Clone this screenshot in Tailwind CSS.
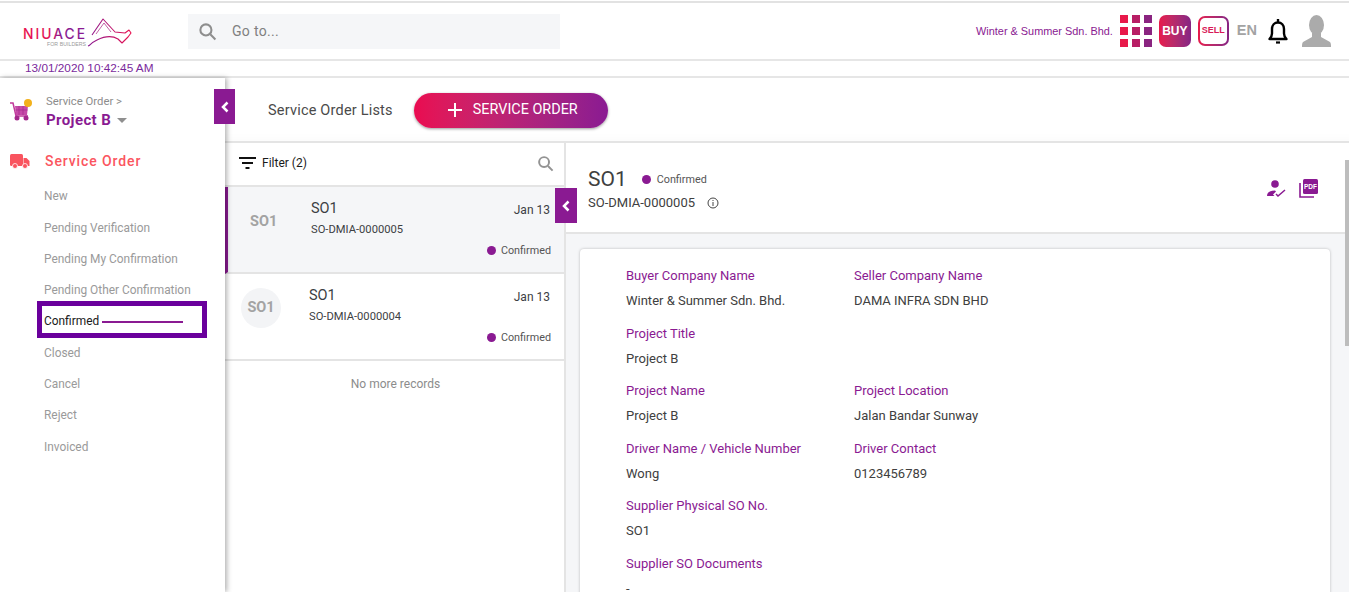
<!DOCTYPE html>
<html lang="en">
<head>
    <meta charset="UTF-8">
    <title>Service Order</title>
    <script src="https://cdn.jsdelivr.net/npm/@tailwindcss/browser@4"></script>
</head>
<body class="h-[592px] overflow-hidden bg-white font-['Roboto',sans-serif] text-[#3c4043]">
    <div class="h-[3px] border-b-2 border-[#e2e2e2]"></div>

    <!-- top bar -->
    <header class="h-[58px] flex items-center border-b-2 border-[#e6e6e6]">
        <div class="w-[188px] shrink-0 pl-[23px]">
            <svg width="110" height="32" viewBox="0 0 110 32" fill="none">
                <defs>
                    <linearGradient id="logoGrad" x1="0" y1="0" x2="1" y2="0">
                        <stop offset="0" stop-color="#e8104f"/>
                        <stop offset="0.45" stop-color="#e0145a"/>
                        <stop offset="0.6" stop-color="#8a1a92"/>
                        <stop offset="1" stop-color="#8a1a92"/>
                    </linearGradient>
                    <linearGradient id="bullGrad" x1="0" y1="0" x2="1" y2="0">
                        <stop offset="0" stop-color="#8a1a92"/>
                        <stop offset="1" stop-color="#e8104f"/>
                    </linearGradient>
                </defs>
                <text x="0" y="24" font-family="Inter, sans-serif" font-size="13.8" font-weight="500" textLength="62" fill="url(#logoGrad)">NIUACE</text>
                <text x="24" y="30.5" font-family="Liberation Sans, sans-serif" font-size="5.2" textLength="39" fill="#999">FOR BUILDERS</text>
                <path d="M69 20 80 4 92 17 102 18 106 15 108 18 105 22 99 28 95 24C90 21 82 21 74 25S68 30 65 31" stroke="url(#bullGrad)" stroke-width="1.100" stroke-linejoin="round"/>
                <path d="M73 19 81 8 88 17" stroke="#a81c80" stroke-width="0.700"/>
            </svg>
        </div>
        <div class="w-[372px] h-[35px] bg-[#f5f6f8] flex items-center pl-[10px]">
            <svg class="w-[19px] h-[19px] text-[#8e8e8e]" viewBox="0 0 24 24" fill="none" stroke="currentColor" stroke-width="2.600"><circle cx="10" cy="10" r="7"/><path d="M15.500 15.500 22 22"/></svg>
            <span class="ml-[15px] text-[14px] tracking-[0.3px] text-[#808080]">Go to...</span>
        </div>
        <div class="ml-auto flex items-center pr-[18px]">
            <span class="font-['Liberation_Sans',sans-serif] text-[10.900px] text-[#8a1a92] mr-[7px]">Winter &amp; Summer Sdn. Bhd.</span>
            <div class="grid grid-cols-3 gap-[4px] w-[32px] mr-[7px]">
                <i class="h-[8px] bg-[#e8194a]"></i><i class="h-[8px] bg-[#b81e65]"></i><i class="h-[8px] bg-[#8a2480]"></i>
                <i class="h-[8px] bg-[#e8194a]"></i><i class="h-[8px] bg-[#b81e65]"></i><i class="h-[8px] bg-[#8a2480]"></i>
                <i class="h-[8px] bg-[#e8194a]"></i><i class="h-[8px] bg-[#b81e65]"></i><i class="h-[8px] bg-[#8a2480]"></i>
            </div>
            <div class="w-[32px] h-[32px] rounded-[7px] bg-gradient-to-r from-[#e8194a] to-[#852484] text-white font-['Liberation_Sans',sans-serif] font-bold text-[12px] flex items-center justify-center mr-[7px]">BUY</div>
            <div class="w-[31px] h-[30px] rounded-[7px] p-[2px] bg-gradient-to-r from-[#e8194a] to-[#852484] mr-[8px]">
                <div class="w-full h-full rounded-[5px] bg-white text-[#d81a58] font-['Liberation_Sans',sans-serif] font-bold text-[9px] flex items-center justify-center">SELL</div>
            </div>
            <span class="font-['Liberation_Sans',sans-serif] font-bold text-[14.500px] text-[#a3a3a3] mr-[11px]">EN</span>
            <svg class="w-[20px] h-[25px] mr-[14px]" viewBox="0 0 20 25" fill="none" stroke="#000" stroke-width="2.400"><path d="M1.500 20h17c-1.500-1.500-2.500-3-2.500-5.500V10c0-4-2.500-6.500-6-6.500S4 6 4 10v4.500C4 17 3 18.500 1.500 20z" stroke-linejoin="round"/><path d="M10 0v3.500"/><path d="M8 23.500h4" stroke-width="2.200"/></svg>
            <svg class="w-[29px] h-[32px] blur-[0.5px]" viewBox="0 0 29 32" fill="#ababab"><ellipse cx="14.500" cy="10" rx="7.500" ry="10"/><path d="M10 18h9v4l9 5c1 1 1 3 1 5H0c0-2 0-4 1-5l9-5z"/></svg>
        </div>
    </header>

    <div class="h-[17px] border-b-2 border-[#e6e6e6] pl-[25px] font-['Liberation_Sans',sans-serif] text-[11.800px] leading-[15px] text-[#7b2a9c]">13/01/2020 10:42:45 AM</div>

    <div class="flex h-[514px]">
        <!-- sidebar -->
        <aside class="relative w-[225px] shrink-0 bg-white z-10 shadow-[2px_0_5px_rgba(0,0,0,0.3)]">
            <div class="flex pl-[9px] pt-[17px]">
                <svg class="w-[24px] h-[26px] mt-[3px]" viewBox="0 0 24 26">
                    <path d="M1 5h3l3 13h12" fill="none" stroke="#c0399a" stroke-width="1.500"/>
                    <path d="M6 8h13l-1 9H7z" fill="#c64aa8"/>
                    <path d="M10 8v9M14 8v9M6.500 12h12" stroke="#a3288c" stroke-width="0.700"/>
                    <circle cx="8" cy="20" r="2.500" fill="#a3288c"/><circle cx="17" cy="20" r="2.500" fill="#a3288c"/>
                    <circle cx="19" cy="5" r="4" fill="#f3b11c"/>
                </svg>
                <div class="ml-[13px]">
                    <div class="text-[11.300px] leading-[13px] text-[#8c8c8c]">Service Order &gt;</div>
                    <div class="flex items-center mt-[2px] text-[15px] font-bold tracking-[0.4px] text-[#8a1a92] leading-[20px]">Project B<span class="ml-[6px] w-0 h-0 border-x-[5px] border-x-transparent border-t-[5px] border-t-[#8f8f8f]"></span></div>
                </div>
            </div>
            <div class="flex items-center pl-[10px] mt-[21px] h-[20px]">
                <svg class="w-[20px] h-[15px]" viewBox="0 0 20 15" fill="#f9545f"><rect x="0" y="0" width="13" height="12" rx="1.500"/><path d="M13.500 4h3l3 3v5h-6z"/><circle cx="5" cy="12" r="2.500" stroke="#fff" stroke-width="0.800"/><circle cx="15" cy="12" r="2.500" stroke="#fff" stroke-width="0.800"/></svg>
                <span class="ml-[15px] text-[14px] font-medium tracking-[0.9px] text-[#fb5560]">Service Order</span>
            </div>
            <nav class="pl-[44px] mt-[10.500px] text-[11.900px] text-[#9a9a9a]">
                <div class="h-[31.300px] flex items-center">New</div>
                <div class="h-[31.300px] flex items-center">Pending Verification</div>
                <div class="h-[31.300px] flex items-center">Pending My Confirmation</div>
                <div class="h-[31.300px] flex items-center">Pending Other Confirmation</div>
                <div class="relative h-[31.300px] flex items-center text-[#1a1a1a]">
                    <span class="absolute -left-[7px] -top-[6px] w-[170px] h-[37px] border-[5px] border-[#6a009c]"></span>
                    <span class="relative">Confirmed</span>
                    <span class="relative ml-[3px] w-[81px] h-[2px] bg-[#8a1a92]"></span>
                </div>
                <div class="h-[31.300px] flex items-center">Closed</div>
                <div class="h-[31.300px] flex items-center">Cancel</div>
                <div class="h-[31.300px] flex items-center">Reject</div>
                <div class="h-[31.300px] flex items-center">Invoiced</div>
            </nav>
            <button class="absolute -right-[10px] top-[11px] w-[21px] h-[35px] bg-[#8a1a92] flex items-center justify-center">
                <svg class="w-[8px] h-[12px]" viewBox="0 0 8 12" fill="none" stroke="#fff" stroke-width="2.500"><path d="M6.500 1.500 2 6l4.500 4.500"/></svg>
            </button>
        </aside>

        <main class="flex-1 min-w-0 flex flex-col">
            <div class="h-[65px] shrink-0 flex items-center pl-[43px] pt-[1px] border-b-2 border-[#e4e4e4] shadow-[inset_0_-12px_12px_-12px_rgba(0,0,0,0.03)]">
                <span class="mt-[1px] text-[14.500px] tracking-[0.2px] text-[#4a4a4a]">Service Order Lists</span>
                <button class="ml-[21px] w-[194px] h-[35px] pl-[4px] rounded-full bg-gradient-to-r from-[#ea0a50] to-[#8a1a92] shadow-[0_1px_3px_rgba(0,0,0,0.4)] flex items-center justify-center text-white text-[14.400px]">
                    <svg class="w-[14px] h-[14px] mr-[11px]" viewBox="0 0 14 14" stroke="#fff" stroke-width="2"><path d="M7 0v14M0 7h14"/></svg>
                    <span class="-mt-[1px]">SERVICE ORDER</span>
                </button>
            </div>
            <div class="flex flex-1 min-h-0">
                <!-- list -->
                <section class="relative w-[341px] shrink-0 border-r-2 border-[#e4e4e4] bg-white">
                    <div class="h-[44px] flex items-center pl-[14px] pr-[10px] pb-[2px] border-b-2 border-[#e4e4e4]">
                        <svg class="w-[17px] h-[12px]" viewBox="0 0 17 12" stroke="#111" stroke-width="2"><path d="M0 1h17M3 6h11M6.500 11h4"/></svg>
                        <span class="ml-[6px] text-[12px] text-[#1a1a1a]">Filter (2)</span>
                        <svg class="ml-auto w-[17px] h-[17px] text-[#939393]" viewBox="0 0 24 24" fill="none" stroke="currentColor" stroke-width="2.800"><circle cx="10" cy="10" r="7"/><path d="M15.500 15.500 22 22"/></svg>
                    </div>
                    <div class="h-[87px] bg-[#f5f6f8] border-l-[3px] border-[#8a1a92] border-b-2 border-b-[#e4e4e4] flex pr-[14px]">
                        <div class="w-[83px] pl-[22px] pt-[24px] text-[14.500px] font-bold text-[#a3a3a3]">SO1</div>
                        <div class="flex-1 pt-[10px]">
                            <div class="flex justify-between"><span class="mt-[1px] text-[14.500px] text-[#3c4043]">SO1</span><span class="text-[12px] leading-[21px] mt-[3px]">Jan 13</span></div>
                            <div class="mt-[1px] text-[11.200px] text-[#3c4043]">SO-DMIA-0000005</div>
                            <div class="flex items-center justify-end -mr-[1px] mt-[4px] text-[10.800px] text-[#555]"><span class="w-[9px] h-[9px] rounded-full bg-[#8a1a92] mr-[5px]"></span>Confirmed</div>
                        </div>
                    </div>
                    <div class="h-[87px] border-b-2 border-[#e4e4e4] flex pr-[14px]">
                        <div class="w-[84px] pl-[16px] pt-[14px]"><div class="w-[40px] h-[40px] rounded-full bg-[#f3f4f6] text-[14.500px] font-bold text-[#a3a3a3] flex items-center justify-center">SO1</div></div>
                        <div class="flex-1 pt-[10px]">
                            <div class="flex justify-between"><span class="mt-[1px] text-[14.500px] text-[#3c4043]">SO1</span><span class="text-[12px] leading-[21px] mt-[3px]">Jan 13</span></div>
                            <div class="mt-[1px] text-[11.200px] text-[#3c4043]">SO-DMIA-0000004</div>
                            <div class="flex items-center justify-end -mr-[1px] mt-[4px] text-[10.800px] text-[#555]"><span class="w-[9px] h-[9px] rounded-full bg-[#8a1a92] mr-[5px]"></span>Confirmed</div>
                        </div>
                    </div>
                    <p class="text-center text-[12px] text-[#8c8c8c] mt-[14px] pl-[2px]">No more records</p>
                    <button class="absolute -right-[13px] top-[45px] w-[22px] h-[35px] bg-[#8a1a92] flex items-center justify-center z-10">
                        <svg class="w-[8px] h-[12px]" viewBox="0 0 8 12" fill="none" stroke="#fff" stroke-width="2.500"><path d="M6.500 1.500 2 6l4.500 4.500"/></svg>
                    </button>
                </section>

                <!-- detail -->
                <section class="flex-1 min-w-0 relative bg-[#f5f6f8] overflow-hidden">
                    <div class="h-[91px] bg-white border-b-2 border-[#e4e4e4] pl-[22px] pr-[31px] flex items-start justify-between">
                        <div class="pt-[22px]">
                            <div class="flex items-center"><span class="text-[21px] leading-[28px] text-[#404040]">SO1</span><span class="ml-[15px] w-[9px] h-[9px] rounded-full bg-[#8a1a92]"></span><span class="ml-[6px] mt-[2px] text-[10.800px] text-[#555]">Confirmed</span></div>
                            <div class="flex items-center text-[13px] text-[#404040]">SO-DMIA-0000005
                                <svg class="ml-[12px] w-[12px] h-[12px]" viewBox="0 0 12 12" fill="none" stroke="#444"><circle cx="6" cy="6" r="5"/><path d="M6 5v4M6 3v1"/></svg>
                            </div>
                        </div>
                        <div class="flex items-center gap-[13px] pt-[36px]">
                            <svg class="w-[19px] h-[17px]" viewBox="0 0 19 17" fill="#8a1a92"><circle cx="8" cy="4" r="3.800"/><path d="M0 16c0-3.500 3-5.500 8-5.500l1 1-3 3 1.500 1.500z"/><path d="M9 14l2 2 7-6" fill="none" stroke="#8a1a92" stroke-width="1.500"/></svg>
                            <svg class="w-[19px] h-[19px]" viewBox="0 0 19 19"><path d="M1 4v14h14" fill="none" stroke="#8a1a92" stroke-width="1.600"/><rect x="4" y="0" width="15" height="15" rx="1.500" fill="#8a1a92"/><text x="11.500" y="10" text-anchor="middle" font-family="Liberation Sans, sans-serif" font-size="6.500" font-weight="700" fill="#fff">PDF</text></svg>
                        </div>
                    </div>
                    <article class="ml-[14px] mt-[15px] w-[750px] h-[400px] bg-white rounded-[4px] shadow-[0_0_3px_rgba(0,0,0,0.25)] pl-[46px] pt-[17px] text-[13px]">
                        <div class="grid grid-cols-[228px_1fr] auto-rows-[57.600px]">
                            <div><div class="text-[#8a1a92] leading-[20px]">Buyer Company Name</div><div class="mt-[5px] leading-[20px] text-[#404040]">Winter &amp; Summer Sdn. Bhd.</div></div>
                            <div><div class="text-[#8a1a92] leading-[20px]">Seller Company Name</div><div class="mt-[5px] leading-[20px] text-[#404040]">DAMA INFRA SDN BHD</div></div>
                            <div class="col-span-2"><div class="text-[#8a1a92] leading-[20px]">Project Title</div><div class="mt-[5px] leading-[20px] text-[#404040]">Project B</div></div>
                            <div><div class="text-[#8a1a92] leading-[20px]">Project Name</div><div class="mt-[5px] leading-[20px] text-[#404040]">Project B</div></div>
                            <div><div class="text-[#8a1a92] leading-[20px]">Project Location</div><div class="mt-[5px] leading-[20px] text-[#404040]">Jalan Bandar Sunway</div></div>
                            <div><div class="text-[#8a1a92] leading-[20px]">Driver Name / Vehicle Number</div><div class="mt-[5px] leading-[20px] text-[#404040]">Wong</div></div>
                            <div><div class="text-[#8a1a92] leading-[20px]">Driver Contact</div><div class="mt-[5px] leading-[20px] text-[#404040]">0123456789</div></div>
                            <div class="col-span-2"><div class="text-[#8a1a92] leading-[20px]">Supplier Physical SO No.</div><div class="mt-[5px] leading-[20px] text-[#404040]">SO1</div></div>
                            <div class="col-span-2"><div class="text-[#8a1a92] leading-[20px]">Supplier SO Documents</div><div class="mt-[5px] leading-[20px] text-[#404040]">-</div></div>
                        </div>
                    </article>
                    <div class="absolute right-0 top-[17px] w-[4px] h-[186px] bg-[#bdbdbd]"></div>
                </section>
            </div>
        </main>
    </div>
</body>
</html>
